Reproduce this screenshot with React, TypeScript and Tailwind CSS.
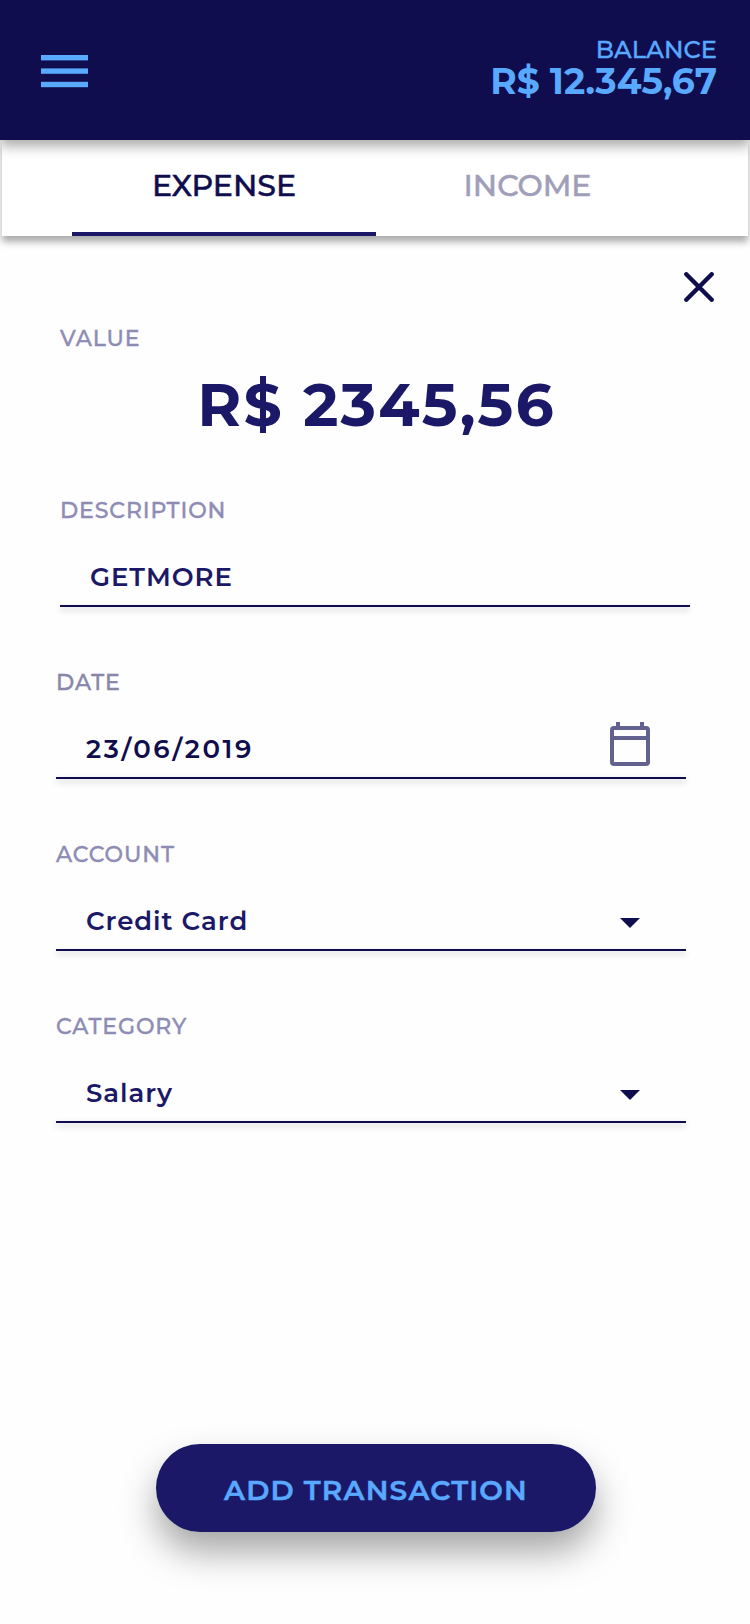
import type { ReactNode } from "react";

function MenuIcon() {
  return (
    <svg width="47" height="33" viewBox="0 0 47 33" fill="#58a9ff" aria-hidden="true">
      <rect y="0" width="47" height="5.4" />
      <rect y="13.4" width="47" height="5.4" />
      <rect y="26.8" width="47" height="5.4" />
    </svg>
  );
}

function CloseIcon() {
  return (
    <svg width="30" height="30" viewBox="0 0 30 30" stroke="#0f0d4d" strokeWidth="4.4" strokeLinecap="round" aria-hidden="true">
      <path d="M2.3 2.3 27.7 27.7M27.7 2.3 2.3 27.7" />
    </svg>
  );
}

function CalendarIcon() {
  return (
    <svg width="40" height="44" viewBox="0 0 40 44" fill="none" stroke="#63618d" strokeWidth="4" aria-hidden="true">
      <rect x="2" y="6" width="36" height="36" rx="2" />
      <path d="M2 16H38M8 0V6M32 0V6" />
    </svg>
  );
}

function CaretIcon() {
  return (
    <svg width="20" height="10" viewBox="0 0 20 10" fill="#0f0d4d" aria-hidden="true">
      <path d="M0 0H20L10 10Z" />
    </svg>
  );
}

type FieldProps = {
  label: ReactNode;
  value: ReactNode;
  className: string;
  icon?: ReactNode;
};

function Field({ label, value, className, icon }: FieldProps) {
  return (
    <div className={`h-28 w-[630px] ${className}`}>
      <div className="flex h-[30px] items-center text-[22px] font-medium tracking-[0.042em] text-[#8e8cb5] [-webkit-text-stroke:0.4px]">{label}</div>
      <div className="mt-6 flex h-14 items-center justify-between pl-[30px] text-[26px] font-semibold tracking-[0.036em] text-[#1b1967]">
        {value}
        {icon}
      </div>
      <div className="h-0.5 bg-[#0f0d4d] shadow-[0_3px_6px_rgba(0,0,0,0.24)]" />
    </div>
  );
}

export default function App() {
  return (
    <div className="flex h-[1624px] w-[750px] flex-col overflow-hidden bg-[#fefefe] font-['Montserrat','Inter',sans-serif] whitespace-nowrap">
      <header className="relative z-10 flex h-[140px] shrink-0 justify-between bg-[#0f0d4d] pt-[35px] pr-[33px] pl-[41px] text-[#58a9ff] shadow-[0_6px_12px_rgba(0,0,0,0.34)]">
        <button className="h-[33px] pt-5" aria-label="Menu">
          <MenuIcon />
        </button>
        <div className="flex flex-col items-end">
          <span className="text-[24px] leading-[30px] font-medium tracking-[0.006em] [-webkit-text-stroke:0.4px]">BALANCE</span>
          <span className="text-[36px] leading-[33px] font-bold">R$ 12.345,67</span>
        </div>
      </header>

      <nav className="mx-0.5 flex h-24 shrink-0 bg-white pl-[70px] text-[30px] leading-[42px] font-medium shadow-[0_6px_7px_rgba(0,0,0,0.32)] [-webkit-text-stroke:0.5px]">
        <div className="w-[304px] border-b-4 border-[#1b1967] pt-[25px] text-center text-[#0f0d4d]">EXPENSE</div>
        <div className="w-[303px] pt-[25px] text-center text-[#a09eb9]">INCOME</div>
      </nav>

      <main className="flex grow flex-col">
        <button className="mt-9 mr-9 flex h-[30px] justify-end" aria-label="Close">
          <CloseIcon />
        </button>
        <div className="mt-[21px] ml-[60px] flex h-[30px] items-center text-[22px] font-medium tracking-[0.042em] text-[#8e8cb5] [-webkit-text-stroke:0.4px]">
          <span>VALUE</span>
        </div>
        <div className="mt-3 flex h-20 items-center justify-center pl-[3px] text-[60px] font-bold tracking-[0.036em] text-[#1b1967]">
          <span>R$ 2345,56</span>
        </div>
        <div className="mt-[50px] flex flex-col gap-[60px]">
          <Field className="ml-[60px]" label={<span>DESCRIPTION</span>} value={<span>GETMORE</span>} />
          <Field
            className="ml-14"
            label={<span className="text-[#8987a9]">DATE</span>}
            value={<span className="tracking-[0.1em] text-[#0f0d4d]">23/06/2019</span>}
            icon={<span className="mr-9 -mt-2.5"><CalendarIcon /></span>}
          />
          <Field
            className="ml-14"
            label={<span>ACCOUNT</span>}
            value={<span>Credit Card</span>}
            icon={<span className="mt-1 mr-[46px]"><CaretIcon /></span>}
          />
          <Field
            className="ml-14"
            label={<span>CATEGORY</span>}
            value={<span>Salary</span>}
            icon={<span className="mt-1 mr-[46px]"><CaretIcon /></span>}
          />
        </div>
        <button className="mt-[321px] ml-[156px] flex h-22 w-[440px] items-center justify-center rounded-full bg-[#1b1967] pt-1 text-[28px] font-semibold tracking-[0.043em] text-[#58a9ff] shadow-[0_20px_36px_rgba(0,0,0,0.35)] [-webkit-text-stroke:0.5px]">
          <span>ADD TRANSACTION</span>
        </button>
      </main>
    </div>
  );
}
